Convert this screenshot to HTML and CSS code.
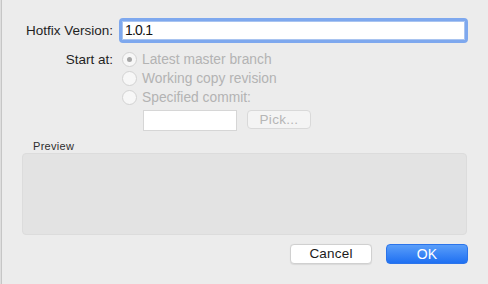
FILE: index.html
```html
<!DOCTYPE html>
<html>
<head>
<meta charset="utf-8">
<link rel="stylesheet" href="styles.css">
</head>
<body>
<div class="window">
  <div class="edge"></div>
  <div class="content">
    <div class="form">
      <div class="label label-version">Hotfix Version:</div>
      <div class="field-focus"><span class="field-text">1.0.1</span></div>
      <div class="label label-start">Start at:</div>
      <div class="options">
        <div class="option"><span class="radio checked"></span><span class="option-text">Latest master branch</span></div>
        <div class="option"><span class="radio"></span><span class="option-text">Working copy revision</span></div>
        <div class="option"><span class="radio"></span><span class="option-text">Specified commit:</span></div>
        <div class="commit-row">
          <div class="commit-field"></div>
          <div class="btn-pick">Pick...</div>
        </div>
      </div>
    </div>
    <div class="preview">
      <div class="preview-label">Preview</div>
      <div class="preview-box"></div>
    </div>
    <div class="actions">
      <div class="btn btn-cancel">Cancel</div>
      <div class="btn btn-ok">OK</div>
    </div>
  </div>
</div>
</body>
</html>
```

FILE: styles.css
```css
html, body {
  margin: 0;
  padding: 0;
  background: #ececec;
}
body {
  font-family: "Liberation Sans", Arial, sans-serif;
  font-size: 13px;
  color: #1e1e1e;
}
.window {
  display: flex;
  width: 488px;
  height: 284px;
  background: #ececec;
}
.edge {
  width: 1px;
  background: #dedede;
  border-right: 1px solid #c6c6c6;
  flex: none;
}
.content {
  flex: 1;
  display: flex;
  flex-direction: column;
  padding: 18px 20px 0 0;
}
.form {
  display: grid;
  grid-template-columns: 111px 1fr;
  column-gap: 6px;
  row-gap: 7px;
}
.label {
  text-align: right;
  font-size: 13.5px;
  color: #1f1f1f;
}
.label-version {
  line-height: 25px;
}
.label-start {
  line-height: 19px;
}
.field-focus {
  height: 19px;
  border: 3px solid #7ea8ee;
  border-radius: 4px;
  background: #fff;
  padding-left: 3px;
  box-shadow: inset 0 0 0 1px #a9c4f0;
}
.field-text {
  font-size: 14px;
  line-height: 19px;
  letter-spacing: -0.8px;
  color: #111;
}
.options {
  display: flex;
  flex-direction: column;
}
.option {
  height: 19px;
  display: flex;
  align-items: center;
  padding-left: 3px;
  gap: 5px;
}
.radio {
  width: 13px;
  height: 13px;
  border: 1px solid #d2d2d2;
  border-radius: 50%;
  background: #f7f7f7;
  display: flex;
  align-items: center;
  justify-content: center;
  flex: none;
}
.radio.checked::after {
  content: "";
  width: 5px;
  height: 5px;
  border-radius: 50%;
  background: #a6a6a6;
}
.option-text {
  color: #b3b3b3;
  font-size: 13.8px;
  line-height: 19px;
}
.commit-row {
  display: flex;
  align-items: flex-start;
  margin-top: 3px;
  margin-left: 24px;
  gap: 10px;
}
.commit-field {
  width: 92px;
  height: 19px;
  background: #fff;
  border: 1px solid #d6d6d6;
}
.btn-pick {
  width: 62px;
  height: 17px;
  border: 1px solid #d9d9d9;
  border-radius: 4px;
  background: #f4f4f4;
  color: #b6b6b6;
  text-align: center;
  font-size: 13.5px;
  line-height: 17px;
  letter-spacing: 0.3px;
}
.preview {
  margin: 9px 1px 0 20px;
}
.preview-label {
  font-size: 11px;
  line-height: 13px;
  letter-spacing: 0.3px;
  color: #2e2e2e;
  padding-left: 11px;
}
.preview-box {
  height: 80px;
  background: #e3e3e3;
  border: 1px solid #dcdcdc;
  border-radius: 4px;
}
.actions {
  display: flex;
  justify-content: flex-end;
  gap: 14px;
  margin-top: 9px;
}
.btn {
  width: 80px;
  height: 18px;
  border-radius: 4px;
  text-align: center;
  font-size: 13.5px;
  line-height: 18px;
  letter-spacing: 0.2px;
}
.btn-cancel {
  background: #fff;
  border: 1px solid #d0d0d0;
  color: #1a1a1a;
  box-shadow: 0 0.5px 1px rgba(0,0,0,0.08);
}
.btn-ok {
  background: linear-gradient(#5a9ef9, #1f70f2);
  border: 1px solid #2b74ea;
  color: #fff;
  font-size: 14px;
}
```
